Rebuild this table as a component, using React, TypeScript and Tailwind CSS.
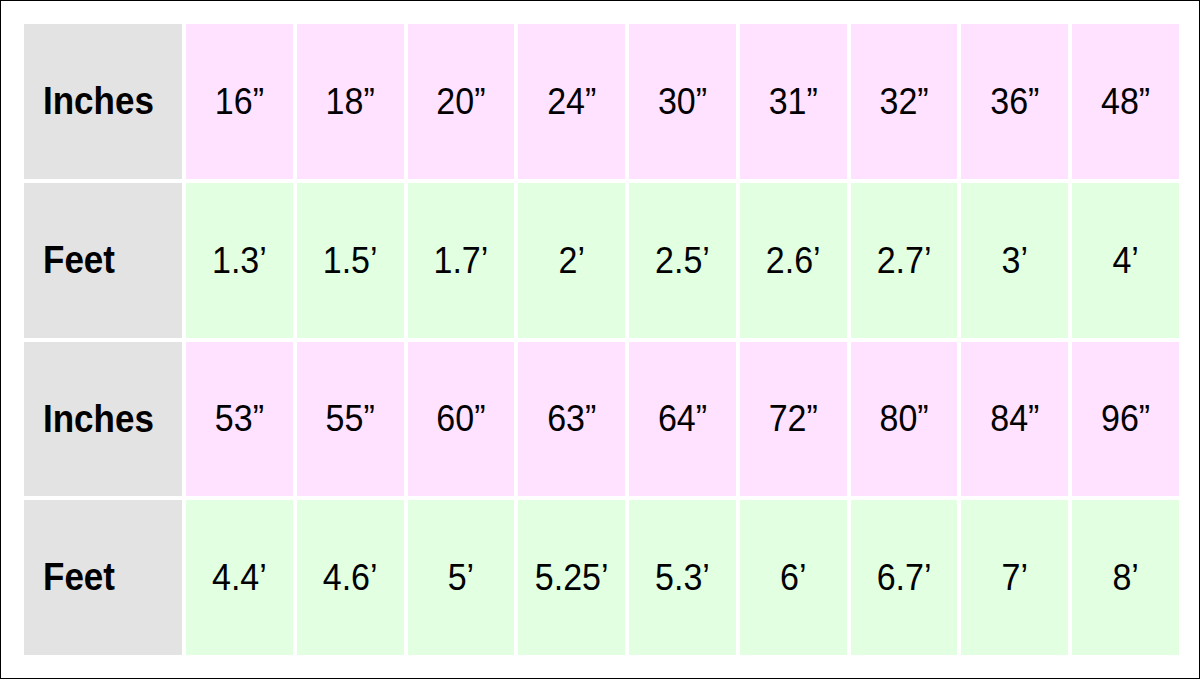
import React from "react";

const rows: { label: string; kind: "pink" | "green"; values: string[] }[] = [
  { label: "Inches", kind: "pink", values: ["16”", "18”", "20”", "24”", "30”", "31”", "32”", "36”", "48”"] },
  { label: "Feet", kind: "green", values: ["1.3’", "1.5’", "1.7’", "2’", "2.5’", "2.6’", "2.7’", "3’", "4’"] },
  { label: "Inches", kind: "pink", values: ["53”", "55”", "60”", "63”", "64”", "72”", "80”", "84”", "96”"] },
  { label: "Feet", kind: "green", values: ["4.4’", "4.6’", "5’", "5.25’", "5.3’", "6’", "6.7’", "7’", "8’"] },
];

export default function App() {
  return (
    <div
      className="w-[1200px] h-[679px] border border-black bg-white p-[23px]"
      style={{ fontFamily: '"Liberation Sans", Arial, sans-serif' }}
    >
      <div className="grid h-[631px] w-[1155px] grid-cols-[158px_repeat(9,1fr)] grid-rows-4 gap-[4px] text-black">
        {rows.map((row, ri) => (
          <React.Fragment key={ri}>
            <div className="flex items-center bg-[#e3e3e3] pl-[19px] text-[35px] font-bold">
              <span className="inline-block scale-y-[1.1]">{row.label}</span>
            </div>
            {row.values.map((v, vi) => (
              <div
                key={vi}
                className={
                  "flex items-center justify-center text-[34px] " +
                  (row.kind === "pink" ? "bg-[#ffe2ff]" : "bg-[#e2ffe2]")
                }
              >
                <span className="inline-block scale-y-[1.07]">{v}</span>
              </div>
            ))}
          </React.Fragment>
        ))}
      </div>
    </div>
  );
}
